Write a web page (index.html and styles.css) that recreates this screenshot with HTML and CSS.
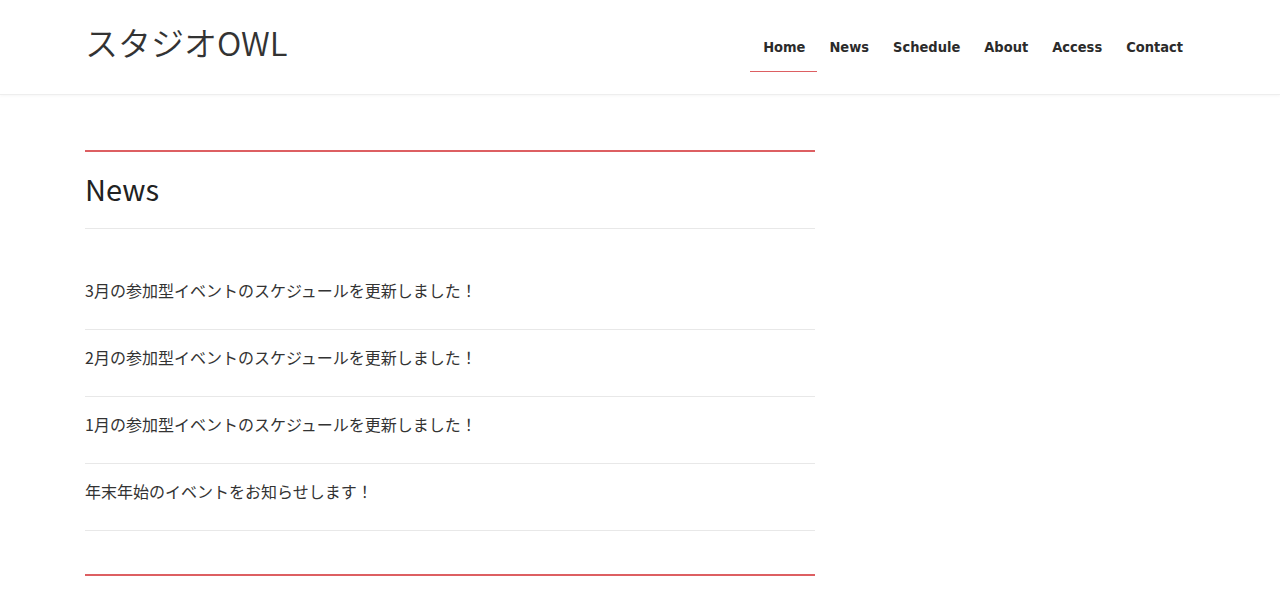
FILE: index.html
```html
<!DOCTYPE html>
<html lang="ja">
<head>
    <meta charset="UTF-8">
    <meta name="viewport" content="width=device-width, initial-scale=1.0">
    <title>スタジオOWL - News</title>
    <link rel="stylesheet" href="styles.css">
</head>
<body>
    <header class="site-header">
        <div class="container header-inner">
            <a href="#" class="logo">スタジオOWL</a>
            <nav class="global-nav">
                <a href="#" class="nav-link active">Home</a>
                <a href="#" class="nav-link">News</a>
                <a href="#" class="nav-link">Schedule</a>
                <a href="#" class="nav-link">About</a>
                <a href="#" class="nav-link">Access</a>
                <a href="#" class="nav-link">Contact</a>
            </nav>
        </div>
    </header>

    <main class="container">
        <section class="news">
            <h2 class="section-title">News</h2>
            <ul class="news-list">
                <li class="news-item"><a href="#">3月の参加型イベントのスケジュールを更新しました！</a></li>
                <li class="news-item"><a href="#">2月の参加型イベントのスケジュールを更新しました！</a></li>
                <li class="news-item"><a href="#">1月の参加型イベントのスケジュールを更新しました！</a></li>
                <li class="news-item"><a href="#">年末年始のイベントをお知らせします！</a></li>
            </ul>
        </section>
    </main>
</body>
</html>
```

FILE: styles.css
```css
body {
    font-family: "Noto Sans CJK JP", "Noto Sans", sans-serif;
    margin: 0;
    padding: 0;
    color: #333333;
    background-color: #FFFFFF;
    overflow: hidden;
}
a {
    color: inherit;
    text-decoration: none;
}
.container {
    width: 1110px;
    margin: 0 auto;
}
.site-header {
    height: 94px;
    border-bottom: 1px solid #EEEEEE;
    box-shadow: 0 1px 3px rgba(0, 0, 0, 0.04);
}
.header-inner {
    display: flex;
    justify-content: space-between;
    align-items: flex-start;
}
.logo {
    margin-top: 25px;
    font-size: 33px;
    line-height: 34px;
    font-weight: 350;
    color: #333333;
}
.global-nav {
    display: flex;
    margin-top: 23px;
}
.nav-link {
    padding: 14px 12px 13px;
    font-family: "DejaVu Sans Condensed", "DejaVu Sans", Verdana, sans-serif;
    font-stretch: condensed;
    font-size: 14.5px;
    line-height: 21px;
    font-weight: bold;
    color: #2B2B2B;
    border-bottom: 1px solid transparent;
}
.nav-link.active {
    margin-left: -1px;
    padding-left: 13px;
    border-bottom-color: #DD5F62; /* red underline on current page */
}
.news {
    width: 730px;
    margin-top: 55px;
    border-top: 2px solid #DD5F62;
    border-bottom: 2px solid #DD5F62;
}
.section-title {
    margin: 0;
    padding: 19px 0 22px;
    font-size: 29px;
    line-height: 35px;
    font-weight: 400;
    color: #222222;
    border-bottom: 1px solid #E8E8E8;
}
.news-list {
    list-style: none;
    margin: 34px 0 43px;
    padding: 0;
}
.news-item {
    padding: 15px 0 27px;
    font-size: 16px;
    line-height: 24px;
    border-bottom: 1px solid #E8E8E8;
}
.news-item a:hover {
    color: #DD5F62;
}
```
